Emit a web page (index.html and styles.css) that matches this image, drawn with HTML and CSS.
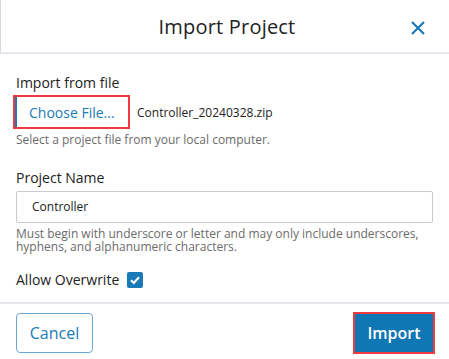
FILE: index.html
```html
<!DOCTYPE html>
<html>
<head>
<meta charset="utf-8">
<link rel="stylesheet" href="styles.css">
</head>
<body>
<div class="dialog">
  <header class="head">
    <h1 class="title">Import Project</h1>
    <button class="close" aria-label="Close">
      <svg width="16" height="16" viewBox="0 0 16 16"><path d="M2 2 L14 14 M14 2 L2 14" stroke="#1a7ab8" stroke-width="2.2" stroke-linecap="butt"/></svg>
    </button>
  </header>
  <main class="body">
    <div class="field">
      <div class="label">Import from file</div>
      <div class="file-row">
        <span class="hl"><button class="choose">Choose File...</button></span>
        <span class="fname">Controller_20240328.zip</span>
      </div>
      <div class="help">Select a project file from your local computer.</div>
    </div>
    <div class="field">
      <div class="label">Project Name</div>
      <div class="input">Controller</div>
      <div class="help">Must begin with underscore or letter and may only include underscores, hyphens, and alphanumeric characters.</div>
    </div>
    <div class="check-row">
      <span class="label">Allow Overwrite</span>
      <span class="checkbox">
        <svg width="16" height="16" viewBox="0 0 16 16"><rect width="16" height="16" rx="2" fill="#1a7ab8"/><path d="M4 8.3 L6.8 11 L12 5.2" stroke="#fff" stroke-width="2.2" fill="none"/></svg>
      </span>
    </div>
  </main>
  <footer class="foot">
    <button class="cancel">Cancel</button>
    <span class="hl hl-import"><button class="import">Import</button></span>
  </footer>
</div>
</body>
</html>
```
FILE: styles.css
```css
* { box-sizing: border-box; }
html, body { margin: 0; padding: 0; background: #fff; }
body { font-family: "Open Sans", "Noto Sans", sans-serif; color: #222; width: 449px; height: 359px; overflow: hidden; }
button { font-family: inherit; }
.dialog { width: 449px; height: 359px; display: flex; flex-direction: column; }
.head { height: 54px; border-left: 1px solid #d6d8de; border-bottom: 2px solid #e7e8ee; display: flex; align-items: center; justify-content: center; position: relative; }
.title { margin: 0; font-size: 20px; font-weight: 400; color: #222; letter-spacing: 0.2px; padding-top: 1px; padding-left: 4px; }
.close { position: absolute; right: 23px; top: 20px; background: none; border: 0; padding: 0; width: 16px; height: 16px; display: flex; }
.body { padding: 19px 16px 0 16px; flex: 1; }
.label { font-size: 14px; line-height: 20px; color: #222; }
.file-row { display: flex; align-items: center; margin-top: 2px; margin-left: -3px; }
.hl { border: 2px solid #ef3a42; display: inline-flex; }
.choose { background: #fff; border: 0; border-left: 2px solid #1a7ab8; height: 30px; width: 113px; padding: 0 0 0 12px; text-align: left; font-size: 14px; color: #1a7ab8; }
.fname { font-size: 12px; margin-left: 7px; color: #222; }
.help { font-size: 12px; line-height: 13.5px; color: #6b6b6b; margin-top: 4px; }
.field + .field { margin-top: 21px; }
.input { margin-top: 3px; height: 32px; border: 1px solid #c9cbcf; border-radius: 2px; font-size: 12px; padding-left: 15px; display: flex; align-items: center; color: #222; }
.check-row { display: flex; align-items: center; gap: 8px; margin-top: 16px; }
.checkbox { display: flex; }
.foot { height: 57px; border-top: 2px solid #e7e8ee; display: flex; align-items: center; justify-content: space-between; padding: 0 14px 0 16px; }
.cancel { width: 77px; height: 40px; border: 1px solid #6aa9d6; border-radius: 4px; background: #fff; color: #1a7ab8; font-size: 16px; padding: 0; margin-top: 3px; }
.hl-import { margin-top: 3px; }
.import { width: 78px; height: 38px; border: 0; background: #1077b5; color: #fff; font-size: 16px; font-weight: 600; padding: 0; }
```
